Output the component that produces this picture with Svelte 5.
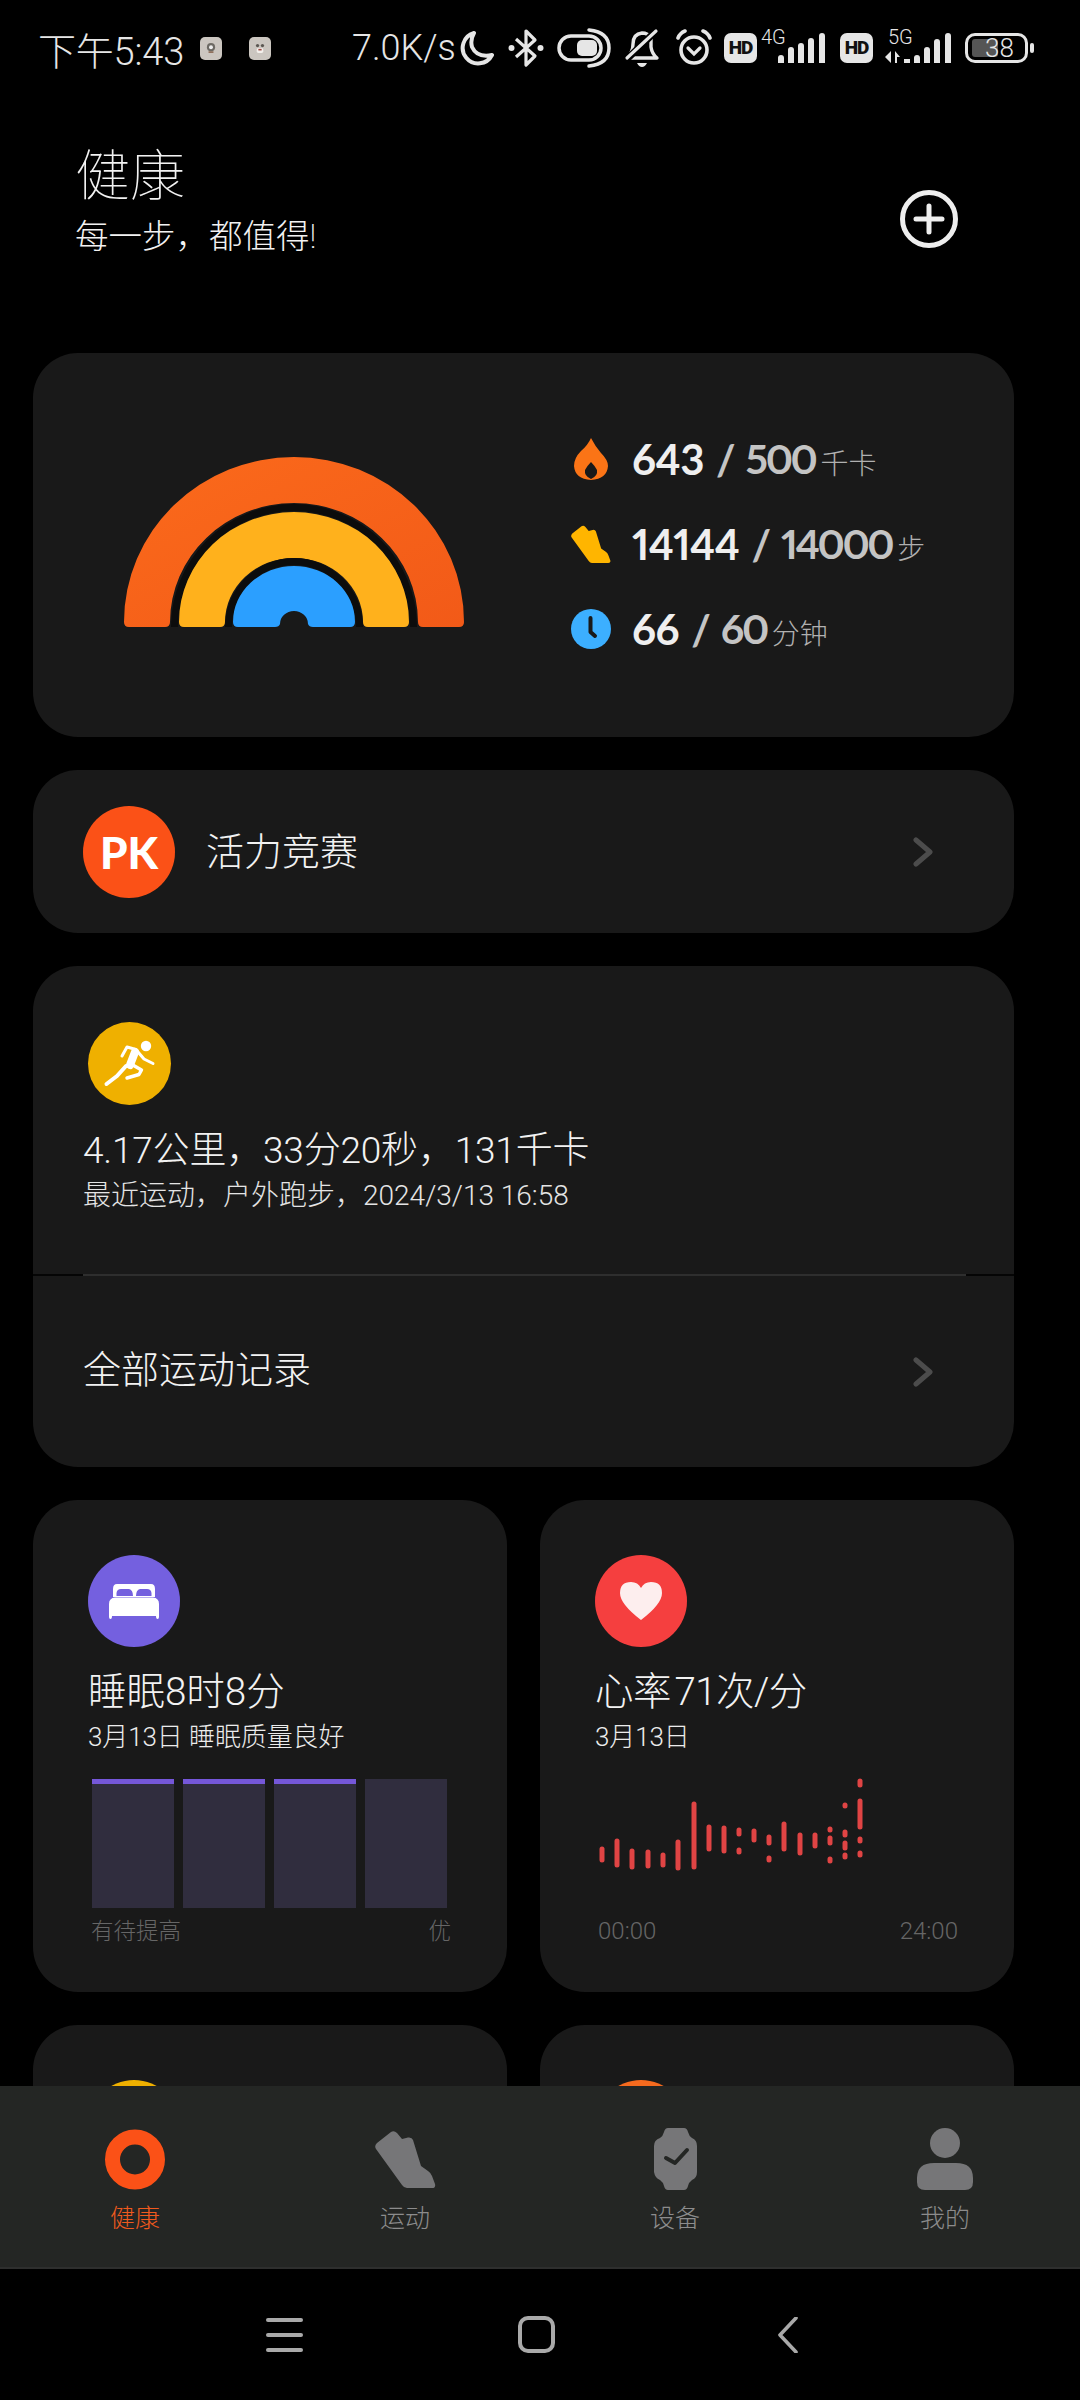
<script>
  const band = (ro, ri, r = 5) => {
    const c = 170, b = 170, h = b - r;
    return `M${c - ro} ${h}A${ro} ${ro - r} 0 0 1 ${c + ro} ${h}Q${c + ro} ${b} ${c + ro - r} ${b}L${c + ri + r} ${b}Q${c + ri} ${b} ${c + ri} ${h}A${ri} ${ri - r} 0 0 0 ${c - ri} ${h}Q${c - ri} ${b} ${c - ri - r} ${b}L${c - ro + r} ${b}Q${c - ro} ${b} ${c - ro} ${h}Z`;
  };

  const stats = [
    { kind: 'flame', cur: '643', goal: '500', unit: '千卡' },
    { kind: 'shoe', cur: '14144', goal: '14000', unit: '步' },
    { kind: 'clock', cur: '66', goal: '60', unit: '分钟' }
  ];

  // heart rate segments, [x, y1, y2] in chart px
  const hr = [
    [32, 89, 100], [47, 81, 105], [62, 91, 107], [78, 92, 106], [93, 95, 105], [108, 82, 108], [124, 44, 107],
    [139, 67, 89], [154, 68, 91], [169, 70, 74], [169, 90, 92], [184, 71, 80], [199, 77, 83], [199, 98, 100],
    [214, 64, 89], [230, 75, 93], [245, 75, 86], [260, 69, 70], [260, 78, 83], [260, 99, 101],
    [275, 45, 46], [275, 72, 75], [275, 83, 88], [275, 95, 97],
    [290, 21, 25], [290, 41, 67], [290, 79, 81], [290, 93, 95]
  ];

  const tabs = ['健康', '运动', '设备', '我的'];
  const shoePath = 'M1 19 Q-1 16 2 13 L16 2 Q19 0 22 3 L27 9 L33 7.5 Q37 7 38 10 L46 36 L53 41 Q56 43 57 46 L60 54 Q61 58 57 58 L32 58 Q29 58 27 55 Z';
</script>

<div class="screen">
  <div class="status">
    <span class="time">下午5:43</span>
    <span class="notif first"><svg width="22" height="22" viewBox="0 0 22 22"><circle cx="11" cy="10" r="5" fill="#6d6a64"/><circle cx="11" cy="10" r="2.4" fill="#eee"/><rect x="8" y="15" width="6" height="2" fill="#8a6a55"/></svg></span>
    <span class="notif"><svg width="22" height="22" viewBox="0 0 22 22"><circle cx="8" cy="8" r="2" fill="#5b5752"/><circle cx="14" cy="8" r="2" fill="#5b5752"/><rect x="7" y="11" width="8" height="6" rx="2" fill="#f3f0ec"/><rect x="9" y="12" width="4" height="2" fill="#9c4a42"/></svg></span>
    <span class="speed">7.0K/s</span>
    <svg class="ic moon" width="36" height="36" viewBox="0 0 36 36"><path d="M15 3 A15.5 15.5 0 1 0 33 25 Q18 28 13 17 Q11 10 15 3Z" fill="none" stroke="#e6e6e6" stroke-width="4" stroke-linejoin="round"/></svg>
    <svg class="ic bt" width="36" height="40" viewBox="0 0 36 40"><path d="M8 11 L27 28 L18 37 L18 3 L27 12 L8 29" fill="none" stroke="#e6e6e6" stroke-width="3.2" stroke-linejoin="round"/><circle cx="3.5" cy="20" r="3" fill="#e6e6e6"/><circle cx="32.5" cy="20" r="3" fill="#e6e6e6"/></svg>
    <svg class="ic toggle" width="54" height="40" viewBox="0 0 54 40"><rect x="2" y="8" width="42" height="24" rx="12" fill="none" stroke="#e6e6e6" stroke-width="3.5"/><rect x="20" y="12" width="20" height="16" rx="5" fill="#e6e6e6"/><path d="M32 2 Q52 4 52 20 Q52 36 32 38" fill="none" stroke="#e6e6e6" stroke-width="3.5" stroke-linecap="round"/></svg>
    <svg class="ic bell" width="36" height="40" viewBox="0 0 36 40"><path d="M3 30 Q9 24 9 16 Q9 6 18 5 Q24 5 27 10 L27 19 Q28 26 33 30 Z" fill="none" stroke="#e6e6e6" stroke-width="3.4" stroke-linejoin="round"/><path d="M2 32 L33 2" stroke="#000" stroke-width="7"/><path d="M3 30 L32 3" stroke="#e6e6e6" stroke-width="3.2" stroke-linecap="round"/><path d="M13 35 H23 Q21 39 18 39 Q15 39 13 35Z" fill="#e6e6e6"/></svg>
    <svg class="ic alarm" width="38" height="38" viewBox="0 0 38 38"><circle cx="19" cy="21" r="13" fill="none" stroke="#e6e6e6" stroke-width="3.6"/><path d="M13 19 L19 25 L25 19" fill="none" stroke="#e6e6e6" stroke-width="3.2" stroke-linecap="round"/><path d="M3 9 Q5 4 10 2 M35 9 Q33 4 28 2" fill="none" stroke="#e6e6e6" stroke-width="3.6" stroke-linecap="round"/></svg>
    <span class="hd">HD</span>
    <span class="net four">
      <span class="gen">4G</span>
      <svg width="48" height="30" viewBox="0 0 48 30"><path d="M1 30V25Q1 22 4 22Q7 22 7 25V30ZM11 30V17Q11 14 14 14Q17 14 17 17V30ZM21 30V13Q21 10 24 10Q27 10 27 13V30ZM31 30V8Q31 5 34 5Q37 5 37 8V30ZM42 30V3Q42 0 45 0Q48 0 48 3V30Z" fill="#e6e6e6"/></svg>
    </span>
    <span class="hd second">HD</span>
    <span class="net five">
      <span class="gen">5G</span>
      <svg width="66" height="30" viewBox="0 0 66 30"><path d="M0 24L6 18V30ZM10 18L15 24H12V30H10ZM19 26H25V30H19ZM29 30V25Q29 22 32 22Q35 22 35 25V30ZM39 30V17Q39 14 42 14Q45 14 45 17V30ZM49 30V9Q49 6 52 6Q55 6 55 9V30ZM60 30V3Q60 0 63 0Q66 0 66 3V30Z" fill="#e6e6e6"/></svg>
    </span>
    <span class="battery"><span class="fill"></span><span class="pct">38</span></span>
    <span class="tip"></span>
  </div>

  <div class="main">
    <header class="head">
      <div>
        <h1>健康</h1>
        <p>每一步，都值得!</p>
      </div>
      <svg class="add" width="58" height="58" viewBox="0 0 58 58"><circle cx="29" cy="29" r="26.5" fill="none" stroke="#eee" stroke-width="5"/><path d="M29 16V42M16 29H42" stroke="#eee" stroke-width="5" stroke-linecap="round"/></svg>
    </header>

    <section class="card summary">
      <svg class="rainbow" width="340" height="170" viewBox="0 0 340 170">
        <defs><linearGradient id="org" x1="0" y1="0" x2="1" y2="1"><stop offset="0" stop-color="#fb6a1b"/><stop offset="1" stop-color="#f25a18"/></linearGradient></defs>
        <path d={band(170, 124)} fill="url(#org)"/>
        <path d={band(123, 116, 0)} fill="#0c0c0c"/>
        <path d={band(115, 69)} fill="#ffb11c"/>
        <path d={band(69, 62, 0)} fill="#0c0c0c"/>
        <path d="M109 165A61 56 0 0 1 231 165Q231 170 226 170L189 170Q185 170 184 167A14 13 0 0 0 156 167Q155 170 151 170L114 170Q109 170 109 165Z" fill="#2b9fff"/>
      </svg>
      <div class="stats">
        {#each stats as s}
          <div class="stat">
            <span class="stat-ic">
              {#if s.kind === 'flame'}
                <svg width="34" height="42" viewBox="0 0 34 42"><path d="M17 0 Q21 8 27 15 Q34 22 34 28 Q33 41 17 42 Q1 41 0 28 Q0 20 7 13 Q14 7 17 0Z" fill="#fb7416"/><path d="M17 24 Q21 28 23 32 Q24 38 17 41 Q10 38 11 32 Q13 28 17 24Z" fill="#191919"/></svg>
              {:else if s.kind === 'shoe'}
                <svg width="40" height="38" viewBox="0 0 61 58"><path d={shoePath} fill="#ffb500"/></svg>
              {:else}
                <svg width="40" height="40" viewBox="0 0 40 40"><circle cx="20" cy="20" r="20" fill="#3cafff"/><path d="M19.5 9V23L24 27" fill="none" stroke="#191919" stroke-width="4" stroke-linecap="round" stroke-linejoin="round"/></svg>
              {/if}
            </span>
            <span class="cur">{s.cur}</span>
            <span class="slash">/</span>
            <span class="goal">{s.goal}</span>
            <span class="unit">{s.unit}</span>
          </div>
        {/each}
      </div>
    </section>

    <section class="card pk">
      <span class="pk-badge">PK</span>
      <span class="row-text">活力竞赛</span>
      <svg class="chev" width="20" height="30" viewBox="0 0 20 30"><path d="M3 3L17 15L3 27" fill="none" stroke="#4c4c4c" stroke-width="5" stroke-linecap="round" stroke-linejoin="round"/></svg>
    </section>

    <section class="card recent">
      <div class="recent-top">
        <span class="run">
          <svg width="83" height="83" viewBox="8 8 83 83" fill="none" stroke="#fff" stroke-linecap="round" stroke-linejoin="round">
            <circle cx="66" cy="32" r="5.2" fill="#fff" stroke="none"/>
            <path d="M42 42L47 33L56 35.5" stroke-width="3"/>
            <path d="M55 38L50 51" stroke-width="8"/>
            <path d="M58 38L64 45L73 49.5" stroke-width="3"/>
            <path d="M51 50L61.5 56L59 60.5L47 64" stroke-width="3.4"/>
            <path d="M46 52L37 62L26.5 70" stroke-width="4"/>
          </svg>
        </span>
        <div class="big">4.17公里，33分20秒，131千卡</div>
        <div class="small">最近运动，户外跑步，2024/3/13 16:58</div>
      </div>
      <div class="divider"><span></span></div>
      <div class="all">
        <span class="row-text">全部运动记录</span>
        <svg class="chev" width="20" height="30" viewBox="0 0 20 30"><path d="M3 3L17 15L3 27" fill="none" stroke="#4c4c4c" stroke-width="5" stroke-linecap="round" stroke-linejoin="round"/></svg>
      </div>
    </section>

    <div class="grid">
      <section class="card tile">
        <span class="tile-ic purple"><svg width="50" height="35" viewBox="0 0 50 35"><path d="M8 0H42Q46 0 46 5V13H4V5Q4 0 8 0Z" fill="#fff"/><path d="M7.5 12V9Q8 5 12 5H20Q24 6 24 12ZM27 12Q27 6 31 5H38Q42 5 42.5 9V12Z" fill="#7460df"/><path d="M6 13.5H44Q50 14 50 20V33Q50 35 48.5 35Q47 35 47 32H3Q3 35 1.5 35Q0 35 0 33V20Q0 14 6 13.5Z" fill="#fff"/></svg></span>
        <div class="tile-title">睡眠8时8分</div>
        <div class="tile-sub">3月13日 睡眠质量良好</div>
        <div class="bars">
          <span class="bar on"></span><span class="bar on"></span><span class="bar on"></span><span class="bar"></span>
        </div>
        <div class="axis sleep"><span>有待提高</span><span>优</span></div>
      </section>
      <section class="card tile">
        <span class="tile-ic red"><svg width="42" height="38" viewBox="0 0 42 38"><path d="M21 38 Q0 22 0 11 Q0 0 11 0 Q18 0 21 6 Q24 0 31 0 Q42 0 42 11 Q42 22 21 38Z" fill="#fdeeee"/></svg></span>
        <div class="tile-title rate">心率 71次/分</div>
        <div class="tile-sub">3月13日</div>
        <svg class="hr" width="320" height="148" viewBox="0 0 320 148">
          {#each hr as [x, a, b]}
            <line x1={x} x2={x} y1={a} y2={b} stroke="#e04444" stroke-width="5" stroke-linecap="round"/>
          {/each}
        </svg>
        <div class="axis heart"><span>00:00</span><span>24:00</span></div>
      </section>
      <section class="card tile"><span class="tile-ic yellow"></span></section>
      <section class="card tile"><span class="tile-ic orange"></span></section>
    </div>
  </div>

  <nav class="tabs">
    {#each tabs as t, i}
      <div class="tab" class:active={i === 0}>
        <span class="tab-ic">
          {#if i === 0}
            <svg width="60" height="61" viewBox="0 0 60 61"><circle cx="30" cy="30.5" r="22.5" fill="none" stroke="#fb5117" stroke-width="15"/></svg>
          {:else if i === 1}
            <svg width="61" height="58" viewBox="0 0 61 58"><path d={shoePath} fill="#767678"/></svg>
          {:else if i === 2}
            <svg width="43" height="62" viewBox="0 0 43 62"><path d="M14 0H30Q33 0 34 4Q35 8 38 10Q43 12 43 18V44Q43 50 38 52Q35 54 34 58Q33 62 30 62H14Q11 62 10 58Q9 54 6 52Q1 50 0 44V18Q0 12 6 10Q9 8 10 4Q11 0 14 0Z" fill="#767678"/><path d="M12 30L21 35L33 22" fill="none" stroke="#242624" stroke-width="4" stroke-linecap="round" stroke-linejoin="round"/></svg>
          {:else}
            <svg width="56" height="62" viewBox="0 0 56 62"><ellipse cx="28" cy="15" rx="15" ry="15" fill="#767678"/><path d="M0 54V50Q0 35 17 35H39Q56 35 56 50V54Q56 62 48 62H8Q0 62 0 54Z" fill="#767678"/></svg>
          {/if}
        </span>
        <span class="tab-label">{t}</span>
      </div>
    {/each}
  </nav>

  <div class="navbar">
    <span class="menu"><i></i><i></i><i></i></span>
    <span class="home"></span>
    <svg class="back" width="21" height="36" viewBox="0 0 21 36"><path d="M19 1L3 18L19 35" fill="none" stroke="#a9a9a9" stroke-width="3.6" stroke-linecap="round" stroke-linejoin="round"/></svg>
  </div>
</div>

<style>
  :global(body) {
    margin: 0;
    background: #000;
  }

  .screen {
    width: 1080px;
    height: 2400px;
    display: flex;
    flex-direction: column;
    overflow: hidden;
    background: #000;
    color: #f2f2f2;
    font-family: Roboto, "Noto Sans CJK SC", sans-serif;
    font-weight: 300;
  }

  .status {
    height: 96px;
    flex: none;
    display: flex;
    align-items: center;
    padding-left: 38px;
    color: #e6e6e6;
  }

  .time {
    font-size: 38px;
    width: 162px;
    letter-spacing: -0.2px;
  }

  .notif {
    width: 22px;
    height: 23px;
    background: #cbc6c0;
    border-radius: 5px;
    display: flex;
    align-items: center;
    justify-content: center;
    margin-right: 27px;
  }

  .notif svg {
    width: 18px;
    height: 18px;
  }

  .speed {
    font-size: 36px;
    margin-left: 54px;
    width: 107px;
  }

  .ic {
    flex: none;
  }

  .bt { margin-left: 13px; }
  .toggle { margin-left: 13px; }
  .bell { margin-left: 13px; }
  .alarm { margin-left: 15px; }

  .hd {
    width: 33px;
    height: 30px;
    margin-left: 11px;
    border-radius: 7px;
    background: #e6e6e6;
    color: #111;
    font-size: 19px;
    font-weight: 900;
    line-height: 30px;
    text-align: center;
    letter-spacing: -1px;
  }

  .hd.second { margin-left: 11px; }

  .net {
    position: relative;
    height: 30px;
    display: flex;
  }

  .net.four {
    width: 52px;
    margin-left: 20px;
  }

  .net.five {
    width: 66px;
    margin-left: 12px;
  }

  .gen {
    position: absolute;
    top: -6px;
    left: -16px;
    font-size: 20px;
    font-weight: 300;
    line-height: 20px;
  }

  .five .gen {
    left: 3px;
  }

  .battery {
    position: relative;
    width: 63px;
    height: 30px;
    margin-left: 14px;
    box-sizing: border-box;
    border: 3px solid #e6e6e6;
    border-radius: 10px;
  }

  .fill {
    position: absolute;
    left: 4px;
    top: 3px;
    bottom: 3px;
    width: 26px;
    background: #555;
    border-radius: 3px;
  }

  .pct {
    position: absolute;
    inset: 0;
    padding-left: 6px;
    text-align: center;
    font-size: 26px;
    line-height: 24px;
  }

  .tip {
    width: 4px;
    height: 10px;
    margin-left: 2px;
    background: #e6e6e6;
    border-radius: 2px;
  }

  .main {
    flex: 1;
    min-height: 0;
    overflow: hidden;
    display: flex;
    flex-direction: column;
    gap: 33px;
    padding: 0 66px 0 33px;
  }

  .head {
    flex: none;
    margin-bottom: -33px;
    padding: 43px 56px 0 42px;
    box-sizing: border-box;
    display: flex;
    justify-content: space-between;
    align-items: flex-start;
    height: 257px;
  }

  h1 {
    margin: 0;
    font-size: 55px;
    line-height: 74px;
    font-weight: 100;
  }

  .head p {
    margin: 0;
    font-size: 33.5px;
    line-height: 47px;
    font-weight: 200;
  }

  .add {
    margin-top: 51px;
  }

  .card {
    background: #191919;
    border-radius: 45px;
    flex: none;
  }

  .summary {
    height: 384px;
    display: flex;
    padding-left: 91px;
    box-sizing: border-box;
    position: relative;
  }

  .rainbow {
    margin-top: 104px;
    flex: none;
  }

  .stats {
    margin-left: 107px;
    padding-top: 63px;
    display: flex;
    flex-direction: column;
  }

  .stat {
    height: 85px;
    display: flex;
    align-items: center;
    white-space: nowrap;
  }

  .stat-ic {
    width: 40px;
    margin-right: 21px;
    display: flex;
    justify-content: center;
  }

  .cur {
    font-family: Lato, "Noto Sans CJK SC", sans-serif;
    font-size: 42px;
    font-weight: 700;
    color: #efefef;
    font-variant-numeric: proportional-nums;
    letter-spacing: -0.5px;
  }

  .slash {
    font-family: Lato, sans-serif;
    font-size: 42px;
    font-weight: 700;
    color: #c4c4c4;
    margin: 0 10px 0 12px;
  }

  .goal {
    font-family: Lato, "Noto Sans CJK SC", sans-serif;
    font-size: 41px;
    font-weight: 700;
    color: #c4c4c4;
    font-variant-numeric: proportional-nums;
    letter-spacing: -2.4px;
  }

  .unit {
    font-size: 28px;
    color: #b0b0b0;
    margin-left: 5px;
    margin-top: 6px;
  }

  .pk {
    height: 163px;
    display: flex;
    align-items: center;
    padding: 0 81px 0 50px;
  }

  .pk-badge {
    width: 92px;
    height: 92px;
    border-radius: 50%;
    background: #fb5117;
    color: #fff;
    font-family: Lato, sans-serif;
    font-weight: 900;
    font-size: 44px;
    line-height: 92px;
    text-align: center;
    margin-right: 31px;
    flex: none;
  }

  .row-text {
    font-size: 38px;
    line-height: 50px;
    flex: 1;
    padding-bottom: 3px;
  }

  .pk .row-text {
    padding-bottom: 0;
  }

  .chev {
    flex: none;
  }

  .recent {
    height: 501px;
    display: flex;
    flex-direction: column;
  }

  .recent-top {
    height: 308px;
    box-sizing: border-box;
    padding: 56px 50px 0;
  }

  .run {
    width: 83px;
    height: 83px;
    border-radius: 50%;
    background: #efb000;
    margin-left: 5px;
    display: flex;
    align-items: center;
    justify-content: center;
  }

  .big {
    font-size: 37px;
    line-height: 50px;
    margin-top: 21px;
    letter-spacing: -0.2px;
  }

  .small {
    font-size: 28px;
    line-height: 40px;
    margin-top: 0;
    color: #e4e4e4;
  }

  .divider {
    height: 2px;
    background: #050505;
    flex: none;
  }

  .divider span {
    display: block;
    height: 2px;
    margin: 0 48px 0 50px;
    background: #2e2e2e;
  }

  .all {
    flex: 1;
    display: flex;
    align-items: center;
    padding: 0 81px 0 50px;
  }

  .grid {
    display: grid;
    grid-template-columns: 474px 474px;
    gap: 33px;
  }

  .tile {
    height: 492px;
    box-sizing: border-box;
    padding: 55px 55px 0;
    display: flex;
    flex-direction: column;
    align-items: flex-start;
  }

  .tile-ic {
    width: 92px;
    height: 92px;
    border-radius: 50%;
    display: flex;
    align-items: center;
    justify-content: center;
    flex: none;
  }

  .purple { background: #7460df; }
  .red { background: #f53f3f; }
  .yellow { background: #efb000; }
  .orange { background: #f56a1e; }

  .tile-title {
    font-size: 38.5px;
    line-height: 50px;
    margin-top: 20px;
    white-space: nowrap;
  }

  .tile-title.rate {
    word-spacing: -5px;
    letter-spacing: -0.6px;
  }

  .tile-sub {
    font-size: 26px;
    line-height: 36px;
    margin-top: 2px;
    color: #ececec;
    letter-spacing: -0.1px;
  }

  .bars {
    display: flex;
    gap: 9px;
    margin-top: 24px;
    margin-left: 4px;
  }

  .bar {
    width: 82px;
    height: 129px;
    background: #302d3e;
  }

  .bar.on {
    border-top: 5px solid #7557d9;
    height: 124px;
  }

  .axis {
    display: flex;
    justify-content: space-between;
    font-size: 22.5px;
    line-height: 32px;
    color: #666;
    margin-top: 7px;
    width: 360px;
    margin-left: 3px;
  }

  .axis.heart {
    margin-left: 3px;
    margin-top: 7px;
    font-size: 24px;
  }

  .hr {
    margin-top: 5px;
    margin-left: -25px;
  }

  .tabs {
    flex: none;
    height: 183px;
    box-sizing: border-box;
    background: #242624;
    border-bottom: 2px solid #2e2f2e;
    display: grid;
    grid-template-columns: repeat(4, 270px);
  }

  .tab {
    display: flex;
    flex-direction: column;
    align-items: center;
    padding-top: 41px;
  }

  .tab-ic {
    height: 64px;
    display: flex;
    align-items: center;
  }

  .tab-label {
    font-size: 25px;
    line-height: 34px;
    margin-top: 11px;
    color: #8c8c8c;
  }

  .active .tab-label {
    color: #f05a1e;
  }

  .navbar {
    flex: none;
    height: 131px;
    display: flex;
    align-items: center;
    padding-left: 266px;
    box-sizing: border-box;
  }

  .menu {
    width: 37px;
    display: flex;
    flex-direction: column;
    gap: 11px;
  }

  .menu i {
    display: block;
    height: 4px;
    border-radius: 2px;
    background: #a9a9a9;
  }

  .home {
    width: 37px;
    height: 37px;
    box-sizing: border-box;
    margin-left: 215px;
    border: 4px solid #a9a9a9;
    border-radius: 10px;
  }

  .back {
    margin-left: 222px;
  }
</style>
